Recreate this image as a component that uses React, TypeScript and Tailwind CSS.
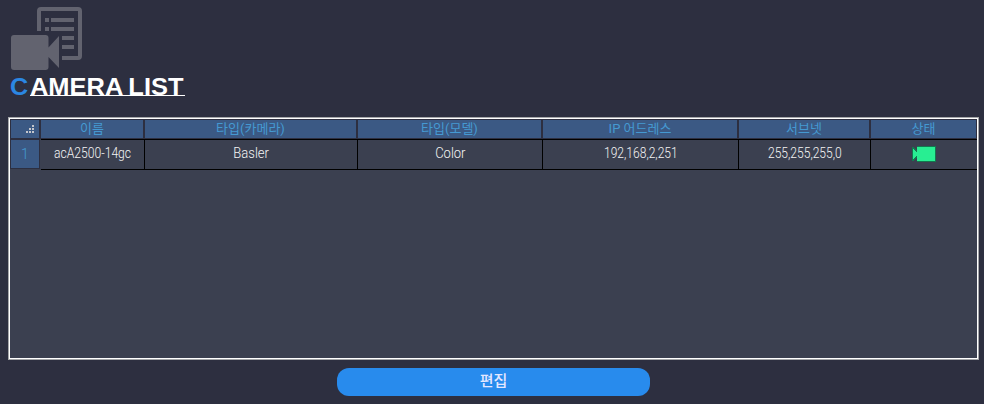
import React from 'react';

const columns = [
  { title: '이름', value: 'acA2500-14gc', fit: 'scale-x-[0.865]' },
  { title: '타입(카메라)', value: 'Basler', fit: 'scale-x-[0.93]' },
  { title: '타입(모델)', value: 'Color', fit: 'scale-x-[0.93]' },
  { title: 'IP 어드레스', value: '192,168,2,251', fit: 'scale-x-[0.86]' },
  { title: '서브넷', value: '255,255,255,0', fit: 'scale-x-[0.86]' },
  { title: '상태', value: null, fit: '' },
];

const grid = 'grid grid-cols-[30px_104px_213px_185px_196px_132px_107px]';

function CameraListIcon() {
  return (
    <svg className="block h-[64px] w-[74px]" viewBox="10 7 74 64" fill="#62636f">
      <path d="M37 31V11q0-4 4-4h37q4 0 4 4v45q0 4-4 4H62v-4h16V11H41v20z" />
      <path d="M45 18h4v4h-4zM51 18h23v4H51zM45 27h4v4h-4zM51 27h23v4H51zM62 36h12v4H62zM62 45h12v4H62z" />
      <path d="M14 35h31.500q3 0 3 3v9.500L59 36v32L48.500 57v10q0 3-3 3H14q-3 0-3-3V38q0-3 3-3z" />
    </svg>
  );
}

function SizeGrip() {
  return (
    <svg className="h-2 w-2" viewBox="0 0 8 8" fill="#c4c6cc" shapeRendering="crispEdges">
      <path d="M6 0h2v2H6zM3 3h2v2H3zM6 3h2v2H6zM0 6h2v2H0zM3 6h2v2H3zM6 6h2v2H6z" />
    </svg>
  );
}

function StatusIcon() {
  return (
    <svg className="mb-px h-4 w-6" viewBox="0 0 24 16" shapeRendering="crispEdges">
      <path d="M0 1h1l4 4V0h19v16H5v-5l-4 4H0z" fill="#14784f" />
      <path d="M1 3l4 4V1h18v14H5V9l-4 4z" fill="#28ee92" />
    </svg>
  );
}

export default function App() {
  return (
    <main className="flex h-[404px] w-[984px] flex-col bg-[#2d2f40] px-2 pt-[7px] font-['Roboto','Noto_Sans_CJK_KR',sans-serif]">
      <header className="h-[110px] pl-[2px]">
        <CameraListIcon />
        <h1 className="flex h-[32px] items-start whitespace-nowrap font-['Liberation_Sans',sans-serif] text-[24px] font-bold leading-[32px] text-white">
          <span className="w-[20px] origin-left scale-x-[1.05] text-[#2b87e3]">C</span>
          <span className="h-[25px] w-[155px] border-b border-white">
            <span className="inline-block origin-left scale-x-[1.06] [word-spacing:-1px]">AMERA LIST</span>
          </span>
        </h1>
      </header>
      <section className="h-[243px] w-[971px] border border-[#a5a7a9]">
        <div className="h-full border border-white bg-[#3b4050]">
          <div className={`${grid} h-[20px]`}>
            <div className="flex items-start justify-end border border-[#2d2f40] bg-[#3b5984] pr-[5px] pt-[5px]">
              <SizeGrip />
            </div>
            {columns.map((c) => (
              <div key={c.title} className="flex items-center justify-center border border-[#2d2f40] bg-[#3b5984] text-[13px] leading-[16px] text-[#4599d2]">
                {c.title}
              </div>
            ))}
          </div>
          <div className={`${grid} h-[31px] text-[14px] font-light text-[#f4f4f4]`}>
            <div className="mb-px flex items-center justify-center border border-[#2d2f40] bg-[#3b5984] text-[#4599d2]">1</div>
            {columns.map((c, i) => (
              <div key={c.title} className={`flex items-center justify-center border-y border-black ${i > 0 ? 'border-l' : 'ml-px'}`}>
                {c.value ? <span className={`mb-[2px] inline-block ${c.fit}`}>{c.value}</span> : <StatusIcon />}
              </div>
            ))}
          </div>
        </div>
      </section>
      <button className="ml-[329px] mt-[8px] h-[28px] w-[313px] rounded-[12px] bg-[#288bed] pb-[2px] text-[15px] font-medium leading-[26px] text-[#e4e7ff]">
        편집
      </button>
    </main>
  );
}
